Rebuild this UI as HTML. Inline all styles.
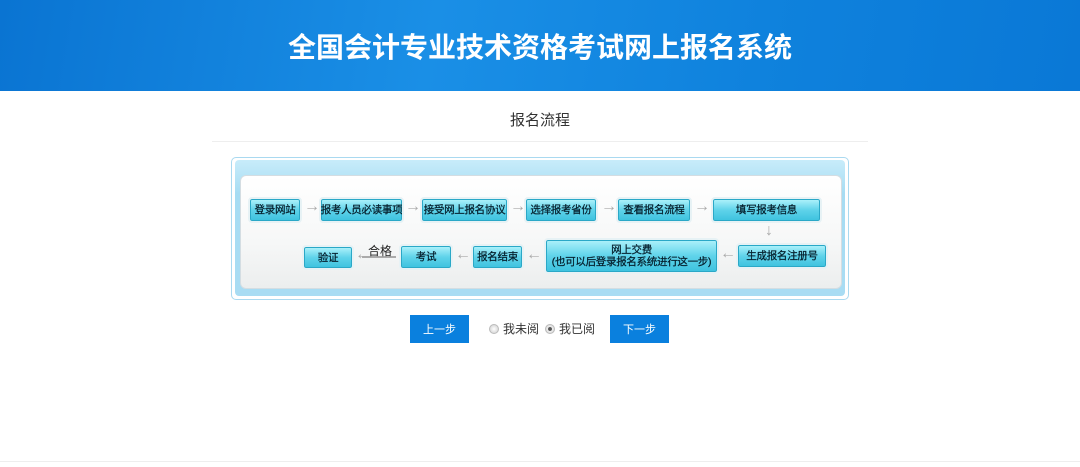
<!DOCTYPE html><html><head><meta charset="utf-8"><style>
body{margin:0;width:1080px;height:467px;background:#fff;position:relative;overflow:hidden;font-family:"Liberation Sans","Noto Sans CJK SC",sans-serif}
.hd{position:absolute;left:0;top:0;width:1080px;height:91px;background:linear-gradient(100deg,#0a74d2 0%,#1a8fe6 40%,#0f82dd 70%,#0a78d6 100%)}
.hd h1{margin:0;position:absolute;width:100%;top:26px;text-align:center;color:#fff;font-size:28px;font-weight:bold;letter-spacing:0}
.t{position:absolute;left:0;width:1080px;top:109px;text-align:center;font-size:15px;color:#333}
.ln{position:absolute;left:212px;width:656px;top:141px;height:1px;background:#eee}
.ob{position:absolute;left:231px;top:157px;width:616px;height:141px;border:1px solid #a9d9f0;border-radius:5px;background:#fff}
.ob2{position:absolute;left:235px;top:160px;width:610px;height:136px;border-radius:4px;background:linear-gradient(#c8ecfa,#a6dcf3 25%,#a8dcf3)}
.ib{position:absolute;left:240px;top:175px;width:600px;height:112px;border:1px solid #d4dde2;border-radius:6px;background:linear-gradient(#fff,#f6f7f7 60%,#eceeee)}
.b{position:absolute;box-sizing:border-box;background:linear-gradient(#aaf0fa,#5fd3ea 50%,#3fc3df);border:1px solid #2aa8c7;outline:2px solid #e7f2f5;border-radius:2px;color:#051f2c;font-size:10.5px;text-align:center;display:flex;align-items:center;justify-content:center;line-height:12px;white-space:nowrap;letter-spacing:-0.3px;-webkit-text-stroke:0.25px #051f2c}
.a{position:absolute;color:#aaa;font-size:16px;font-weight:bold}
.btn{position:absolute;top:315px;width:59px;height:28px;background:#0a80de;color:#fff;font-size:11px;text-align:center;line-height:30px}
.r{position:absolute;top:324px;width:8px;height:8px;border-radius:50%;background:radial-gradient(#fff,#ccc);border:1px solid #bbb}
.lb{position:absolute;top:320px;font-size:12px;color:#333}
</style></head><body>
<div class="hd"><h1>全国会计专业技术资格考试网上报名系统</h1></div>
<div class="t">报名流程</div><div class="ln"></div>
<div class="ob"></div><div class="ob2"></div><div class="ib"></div>
<div class="b" style="left:250px;top:199px;width:50px;height:22px">登录网站</div>
<div class="a" style="left:304px;top:198px">→</div>
<div class="b" style="left:321px;top:199px;width:81px;height:22px">报考人员必读事项</div>
<div class="a" style="left:405px;top:198px">→</div>
<div class="b" style="left:422px;top:199px;width:85px;height:22px">接受网上报名协议</div>
<div class="a" style="left:510px;top:198px">→</div>
<div class="b" style="left:526px;top:199px;width:70px;height:22px">选择报考省份</div>
<div class="a" style="left:601px;top:198px">→</div>
<div class="b" style="left:618px;top:199px;width:72px;height:22px">查看报名流程</div>
<div class="a" style="left:694px;top:198px">→</div>
<div class="b" style="left:713px;top:199px;width:107px;height:22px">填写报考信息</div>
<div class="a" style="left:765px;top:222px">↓</div>
<div class="b" style="left:738px;top:245px;width:88px;height:22px">生成报名注册号</div>
<div class="a" style="left:720px;top:245px">←</div>
<div class="b" style="left:546px;top:240px;width:171px;height:32px;flex-direction:column">网上交费<br>(也可以后登录报名系统进行这一步)</div>
<div class="a" style="left:526px;top:246px">←</div>
<div class="b" style="left:473px;top:246px;width:49px;height:22px">报名结束</div>
<div class="a" style="left:455px;top:246px">←</div>
<div class="b" style="left:401px;top:246px;width:50px;height:22px">考试</div>
<div style="position:absolute;left:362px;top:256px;width:34px;height:2px;background:#aaa"></div>
<div class="a" style="left:355px;top:246px">←</div>
<div style="position:absolute;left:368px;top:242px;font-size:12px;color:#222">合格</div>
<div class="b" style="left:304px;top:247px;width:48px;height:21px">验证</div>
<div class="btn" style="left:410px">上一步</div>
<div class="r" style="left:489px"></div><div class="lb" style="left:503px">我未阅</div>
<div class="r" style="left:545px;background:radial-gradient(#555 30%,#eee 40%,#ccc)"></div><div class="lb" style="left:559px">我已阅</div>
<div class="btn" style="left:610px">下一步</div>
<div style="position:absolute;left:0;top:461px;width:1080px;height:1px;background:#eee"></div>
</body></html>
